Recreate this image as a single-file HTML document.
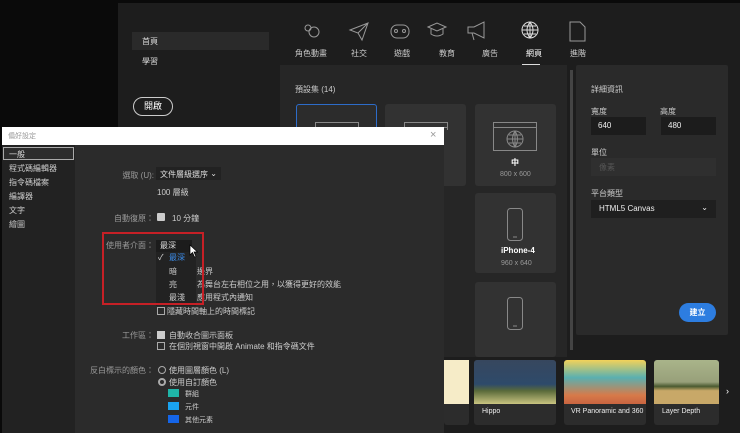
<!DOCTYPE html>
<html><head><meta charset="utf-8"><style>
*{margin:0;padding:0;box-sizing:border-box}
body{width:740px;height:433px;overflow:hidden;background:#0a0a0a;font-family:"Liberation Sans","Noto Sans CJK TC",sans-serif;font-size:8px;color:#ccc;position:relative}
.a{position:absolute}
.card{position:absolute;background:#323232;border-radius:3px;width:81px;height:82px}
.t{position:absolute;white-space:nowrap}
.l{position:absolute;white-space:nowrap;right:586px;color:#999}
</style></head><body>
<div class="a" style="left:118px;top:3px;width:622px;height:430px;background:#1d1d1d"></div>
<div class="a" style="left:132px;top:32px;width:137px;height:18px;background:#2a2a2a"></div>
<div class="t" style="left:142px;top:36px;color:#ddd">首頁</div>
<div class="t" style="left:142px;top:56px;color:#ddd">學習</div>
<div class="a" style="left:133px;top:97px;width:40px;height:19px;border:1.5px solid #ccc;border-radius:10px;color:#fff;font-size:9px;text-align:center;line-height:16px">開啟</div>
<svg class="a" style="left:270px;top:18px" width="340" height="30" fill="none" stroke="#999" stroke-width="1">
<circle cx="44" cy="14" r="5"/><circle cx="38" cy="10" r="3"/>
<path d="M80 12 L98 5 L92 22 L88 15 Z M88 15 L98 5"/>
<rect x="121" y="7" width="18" height="13" rx="6"/><circle cx="126" cy="13" r="1.5"/><circle cx="134" cy="13" r="1.5"/>
<path d="M158 9 L167 5 L176 9 L167 13 Z M161 11 V16 Q167 20 173 16 V11"/>
<path d="M198 9 H204 L214 4 V20 L204 15 H198 Z M202 15 L204 22"/>
<circle cx="260" cy="12" r="8" stroke="#ddd"/><path d="M252 12 H268 M260 4 V20 M254 8 H266 M254 16 H266 M260 4 Q254 12 260 20 Q266 12 260 4" stroke="#ddd"/>
<path d="M300 4 H310 L315 9 V23 H300 Z" />
</svg>
<div class="t" style="left:295px;top:48px">角色動畫</div>
<div class="t" style="left:351px;top:48px">社交</div>
<div class="t" style="left:394px;top:48px">遊戲</div>
<div class="t" style="left:439px;top:48px">教育</div>
<div class="t" style="left:482px;top:48px">廣告</div>
<div class="t" style="left:526px;top:48px;color:#fff">網頁</div>
<div class="t" style="left:570px;top:48px">進階</div>
<div class="a" style="left:522px;top:64px;width:18px;height:2px;background:#ddd"></div>
<div class="a" style="left:280px;top:65px;width:287px;height:292px;background:#262626"></div>
<div class="a" style="left:570px;top:70px;width:3px;height:280px;background:#444"></div>
<div class="t" style="left:295px;top:84px">預設集 (14)</div>
<div class="card" style="left:296px;top:104px;border:1.5px solid #2d6cc9;background:#2c2c2c"></div>
<div class="card" style="left:385px;top:104px"></div>
<svg class="a" style="left:312px;top:120px" width="50" height="10" fill="none" stroke="#888"><rect x="3.5" y="2.5" width="43" height="20"/><path d="M3.5 7.5H46.5"/></svg>
<svg class="a" style="left:401px;top:120px" width="50" height="10" fill="none" stroke="#888"><rect x="3.5" y="2.5" width="43" height="20"/><path d="M3.5 7.5H46.5"/></svg>
<div class="card" style="left:475px;top:104px"></div>
<div class="card" style="left:475px;top:193px;height:80px"></div>
<div class="card" style="left:475px;top:282px;height:75px"></div>
<svg class="a" style="left:490px;top:120px" width="50" height="32" fill="none" stroke="#888"><rect x="3.5" y="2.5" width="43" height="28"/><path d="M3.5 7.5H46.5"/><circle cx="25" cy="19" r="8"/><path d="M17 19H33M25 11V27M19 15H31M19 23H31M25 11Q20 19 25 27Q30 19 25 11"/></svg>
<div class="t" style="left:511px;top:157px;color:#fff;font-weight:bold">中</div>
<div class="t" style="left:500px;top:171px;color:#999;font-size:7px">800 x 600</div>
<svg class="a" style="left:505px;top:207px" width="20" height="36" fill="none" stroke="#888"><rect x="2.5" y="1.5" width="15" height="32" rx="3"/><path d="M8 30H12"/></svg>
<div class="t" style="left:501px;top:246px;color:#fff;font-weight:bold">iPhone-4</div>
<div class="t" style="left:501px;top:260px;color:#999;font-size:7px">960 x 640</div>
<svg class="a" style="left:505px;top:296px" width="20" height="36" fill="none" stroke="#888"><rect x="2.5" y="1.5" width="15" height="32" rx="3"/><path d="M8 30H12"/></svg>
<div class="a" style="left:576px;top:65px;width:152px;height:270px;background:#2a2a2a;border-radius:2px"></div>
<div class="t" style="left:591px;top:84px">詳細資訊</div>
<div class="t" style="left:591px;top:106px">寬度</div>
<div class="t" style="left:660px;top:106px">高度</div>
<div class="a" style="left:591px;top:117px;width:55px;height:18px;background:#1c1c1c;color:#eee;padding:4px 7px;font-size:8px">640</div>
<div class="a" style="left:661px;top:117px;width:55px;height:18px;background:#1c1c1c;color:#eee;padding:4px 7px;font-size:8px">480</div>
<div class="t" style="left:591px;top:147px">單位</div>
<div class="a" style="left:591px;top:158px;width:125px;height:18px;background:#2f2f2f;color:#555;padding:4px 8px">像素</div>
<div class="t" style="left:591px;top:188px">平台類型</div>
<div class="a" style="left:591px;top:200px;width:125px;height:18px;background:#1f1f1f;color:#eee;padding:4px 8px">HTML5 Canvas<span style="position:absolute;right:8px;top:3px">⌄</span></div>
<div class="a" style="left:679px;top:303px;width:37px;height:19px;background:#2d7de0;border-radius:10px;color:#fff;text-align:center;line-height:19px;font-weight:bold">建立</div>
<div class="a" style="left:444px;top:360px;width:25px;height:65px;background:#2c2c2c;border-radius:3px"><div style="height:44px;background:#f6ecc8"></div></div>
<div class="a" style="left:474px;top:360px;width:82px;height:65px;background:#2c2c2c;border-radius:3px;overflow:hidden"><div style="height:44px;background:linear-gradient(#37475e 0,#2e4a6a 55%,#5a6a3a 70%,#c9c480 100%)"></div><div class="t" style="left:8px;top:48px;color:#eee;font-size:7px">Hippo</div></div>
<div class="a" style="left:564px;top:360px;width:82px;height:65px;background:#2c2c2c;border-radius:3px;overflow:hidden"><div style="height:44px;background:linear-gradient(#f2d25a,#5ab0b0 40%,#d77a4a 80%,#c96440)"></div><div class="t" style="left:7px;top:48px;color:#eee;font-size:7px">VR Panoramic and 360 ...</div></div>
<div class="a" style="left:654px;top:360px;width:65px;height:65px;background:#2c2c2c;border-radius:3px;overflow:hidden"><div style="height:44px;background:linear-gradient(#a9b48a,#98a07a 50%,#4a5a30 60%,#c8a868 70%,#c8a868)"></div><div class="t" style="left:8px;top:48px;color:#eee;font-size:7px">Layer Depth</div></div>
<div class="t" style="left:726px;top:386px;color:#fff;font-size:9px">›</div>
<div class="a" style="left:2px;top:127px;width:442px;height:306px;background:#2b2b2b"></div>
<div class="a" style="left:2px;top:127px;width:442px;height:18px;background:#fff"></div>
<div class="t" style="left:8px;top:131px;color:#999;font-size:7px">偏好設定</div>
<div class="t" style="left:430px;top:129px;color:#999;font-size:11px">×</div>
<div class="a" style="left:2px;top:145px;width:73px;height:288px;background:#222"></div>
<div class="a" style="left:3px;top:147px;width:71px;height:13px;border:1px solid #aaa;background:#2d2d2d"></div>
<div class="t" style="left:9px;top:149px;color:#ddd">一般</div>
<div class="t" style="left:9px;top:163px">程式碼編輯器</div>
<div class="t" style="left:9px;top:177px">指令碼檔案</div>
<div class="t" style="left:9px;top:191px">編譯器</div>
<div class="t" style="left:9px;top:205px">文字</div>
<div class="t" style="left:9px;top:219px">繪圖</div>
<div class="l" style="top:170px">選取 (U):</div>
<div class="a" style="left:156px;top:167px;width:65px;height:13px;background:#222;padding:2px 4px;color:#ddd">文件層級選序 <span style="float:right">⌄</span></div>
<div class="t" style="left:157px;top:187px">100 層級</div>
<div class="l" style="top:213px">自動復原：</div>
<div class="a" style="left:157px;top:213px;width:8px;height:8px;background:#ccc;border-radius:1px"></div>
<div class="t" style="left:172px;top:213px">10 分鐘</div>
<div class="l" style="top:240px">使用者介面：</div>
<div class="a" style="left:156px;top:240px;width:36px;height:12px;background:#1c1c1c;padding:1px 4px;color:#ddd;line-height:10px">最深</div>
<div class="a" style="left:156px;top:252px;width:40px;height:54px;background:#222"></div>
<div class="t" style="left:158px;top:253px;color:#ddd;line-height:10px">✓</div>
<div class="t" style="left:169px;top:253px;color:#3b8be8;line-height:10px">最深</div>
<div class="t" style="left:169px;top:267px;line-height:10px">暗</div>
<div class="t" style="left:169px;top:280px;line-height:10px">亮</div>
<div class="t" style="left:169px;top:293px;line-height:10px">最淺</div>
<div class="t" style="left:197px;top:267px;line-height:10px">邊界</div>
<div class="t" style="left:197px;top:280px;line-height:10px">為舞台左右相位之用，以獲得更好的效能</div>
<div class="t" style="left:197px;top:293px;line-height:10px">應用程式內通知</div>
<div class="a" style="left:102px;top:232px;width:102px;height:73px;border:2px solid #c62026"></div>
<svg class="a" style="left:189px;top:244px" width="10" height="14"><path d="M1 1V11L3.5 8.5L5.5 13L7 12.5L5 8H8.5Z" fill="#fff" stroke="#000" stroke-width=".7"/></svg>
<div class="a" style="left:157px;top:307px;width:8px;height:8px;border:1px solid #aaa"></div>
<div class="t" style="left:167px;top:306px">隱藏時間軸上的時間標記</div>
<div class="l" style="top:330px">工作區：</div>
<div class="a" style="left:157px;top:331px;width:8px;height:8px;background:#ccc"></div>
<div class="t" style="left:169px;top:330px">自動收合圖示面板</div>
<div class="a" style="left:157px;top:342px;width:8px;height:8px;border:1px solid #aaa"></div>
<div class="t" style="left:169px;top:341px">在個別視窗中開啟 Animate 和指令碼文件</div>
<div class="l" style="top:365px">反白標示的顏色：</div>
<div class="a" style="left:158px;top:366px;width:8px;height:8px;border:1px solid #aaa;border-radius:50%"></div>
<div class="t" style="left:169px;top:365px">使用圖層顏色 (L)</div>
<div class="a" style="left:158px;top:378px;width:8px;height:8px;border:2.5px solid #aaa;border-radius:50%"></div>
<div class="t" style="left:169px;top:377px">使用自訂顏色</div>
<div class="a" style="left:168px;top:389px;width:11px;height:8px;background:#1fb5a8"></div>
<div class="t" style="left:185px;top:389px;font-size:7px">群組</div>
<div class="a" style="left:168px;top:402px;width:11px;height:8px;background:#1aa3f0"></div>
<div class="t" style="left:185px;top:402px;font-size:7px">元件</div>
<div class="a" style="left:168px;top:415px;width:11px;height:8px;background:#1565e8"></div>
<div class="t" style="left:185px;top:415px;font-size:7px">其他元素</div>
</body></html>
